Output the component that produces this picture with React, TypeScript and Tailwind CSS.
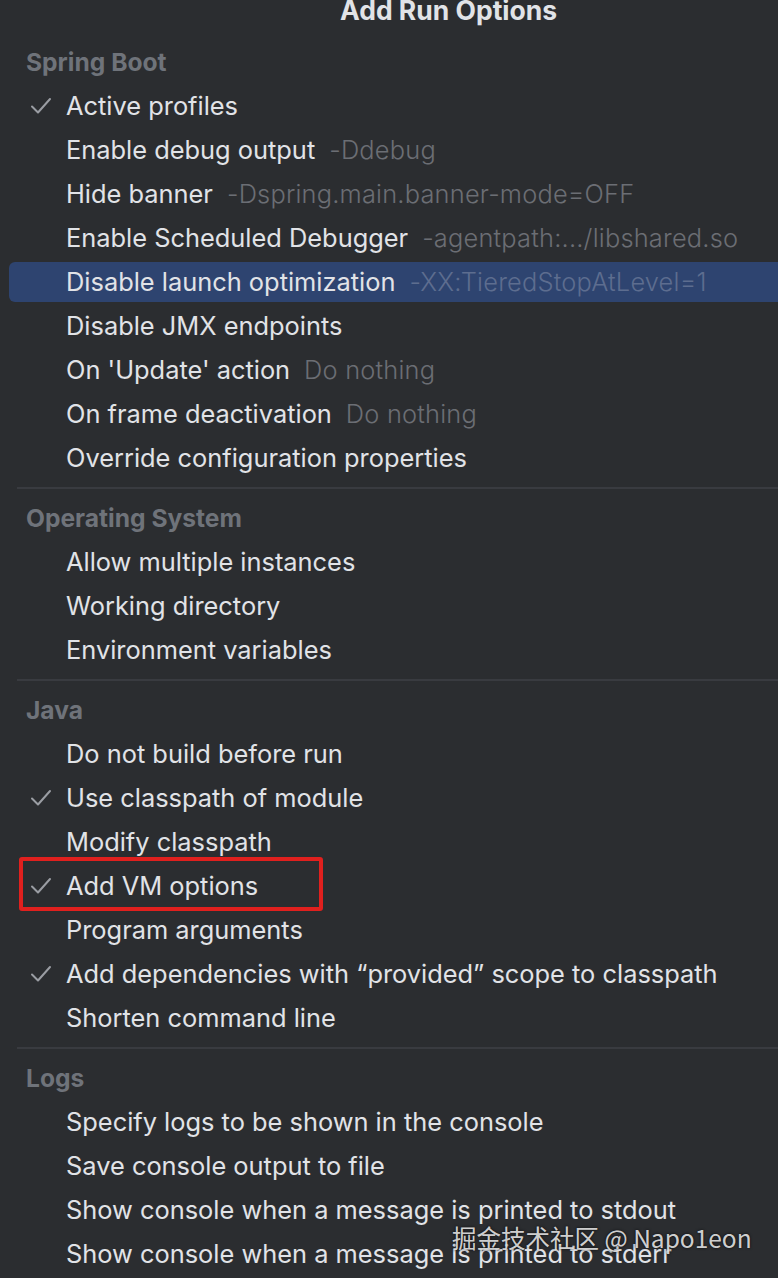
import React from 'react';

type Option = {
  label: string;
  hint?: string;
  checked?: boolean;
  selected?: boolean;
  boxed?: boolean;
};

type Group = {
  title: string;
  options: Option[];
};

const GROUPS: Group[] = [
  {
    title: 'Spring Boot',
    options: [
      { label: 'Active profiles', checked: true },
      { label: 'Enable debug output', hint: '-Ddebug' },
      { label: 'Hide banner', hint: '-Dspring.main.banner-mode=OFF' },
      { label: 'Enable Scheduled Debugger', hint: '-agentpath:.../libshared.so' },
      { label: 'Disable launch optimization', hint: '-XX:TieredStopAtLevel=1', selected: true },
      { label: 'Disable JMX endpoints' },
      { label: "On 'Update' action", hint: 'Do nothing' },
      { label: 'On frame deactivation', hint: 'Do nothing' },
      { label: 'Override configuration properties' },
    ],
  },
  {
    title: 'Operating System',
    options: [
      { label: 'Allow multiple instances' },
      { label: 'Working directory' },
      { label: 'Environment variables' },
    ],
  },
  {
    title: 'Java',
    options: [
      { label: 'Do not build before run' },
      { label: 'Use classpath of module', checked: true },
      { label: 'Modify classpath' },
      { label: 'Add VM options', checked: true, boxed: true },
      { label: 'Program arguments' },
      { label: 'Add dependencies with \u201cprovided\u201d scope to classpath', checked: true },
      { label: 'Shorten command line' },
    ],
  },
  {
    title: 'Logs',
    options: [
      { label: 'Specify logs to be shown in the console' },
      { label: 'Save console output to file' },
      { label: 'Show console when a message is printed to stdout' },
      { label: 'Show console when a message is printed to stderr' },
    ],
  },
];

function Check() {
  return (
    <svg width="22" height="20" viewBox="0 0 22 20" fill="none" className="text-[#9a9da3]">
      <path d="M2 10.5 L8 16.5 L20 3" stroke="currentColor" strokeWidth="2" strokeLinecap="round" strokeLinejoin="round" />
    </svg>
  );
}

function OptionRow({ option }: { option: Option }) {
  return (
    <div className="relative h-[44px]">
      {option.selected && (
        <div className="absolute left-[9px] right-[-10px] top-[2px] bottom-[2px] rounded-[6px] bg-[#2e4470]" />
      )}
      {option.boxed && (
        <div className="absolute left-[19px] top-[-7px] w-[304px] h-[54px] rounded-[3px] border-[4px] border-[#e0201e]" />
      )}
      <div className="relative flex items-center h-full whitespace-nowrap">
        <div className="w-[66px] flex justify-end pr-[14px]">{option.checked && <Check />}</div>
        <span className="text-[#e1e3e7]">{option.label}</span>
        {option.hint && (
          <span
            className={
              'ml-[14px] font-light tracking-[0.2px] ' + (option.selected ? 'text-[#5d6d8f]' : 'text-[#6b6e74]')
            }
          >
            {option.hint}
          </span>
        )}
      </div>
    </div>
  );
}

export default function App() {
  return (
    <div
      className="w-[778px] h-[1278px] overflow-hidden bg-[#2b2d30] text-[25.4px] leading-[44px] relative"
      style={{ fontFamily: 'Inter, "Noto Sans", "Liberation Sans", sans-serif' }}
    >
      <div className="-mt-[12px] mb-[8px] h-[44px] pl-[340px] text-[26.5px] font-bold text-[#e1e3e7] whitespace-nowrap">
        Add Run Options
      </div>
      {GROUPS.map((group, gi) => (
        <div key={group.title}>
          {gi > 0 && (
            <div className="h-[16px] flex items-center pl-[17px]">
              <div className="h-[2px] w-full bg-[#393b40]" />
            </div>
          )}
          <div className="h-[44px] pl-[26px] text-[24.6px] font-bold text-[#6f737a]">{group.title}</div>
          {group.options.map((o) => (
            <OptionRow key={o.label} option={o} />
          ))}
        </div>
      ))}
      <div
        className="absolute left-[452px] top-[1221px] text-[24.5px] leading-[34px] text-[#e8e8e8]/90 whitespace-nowrap [text-shadow:0_0_3px_rgba(0,0,0,0.8)]"
        style={{ fontFamily: '"Noto Sans CJK SC", "Noto Sans", sans-serif' }}
      >
        掘金技术社区 @ Napo1eon
      </div>
    </div>
  );
}
